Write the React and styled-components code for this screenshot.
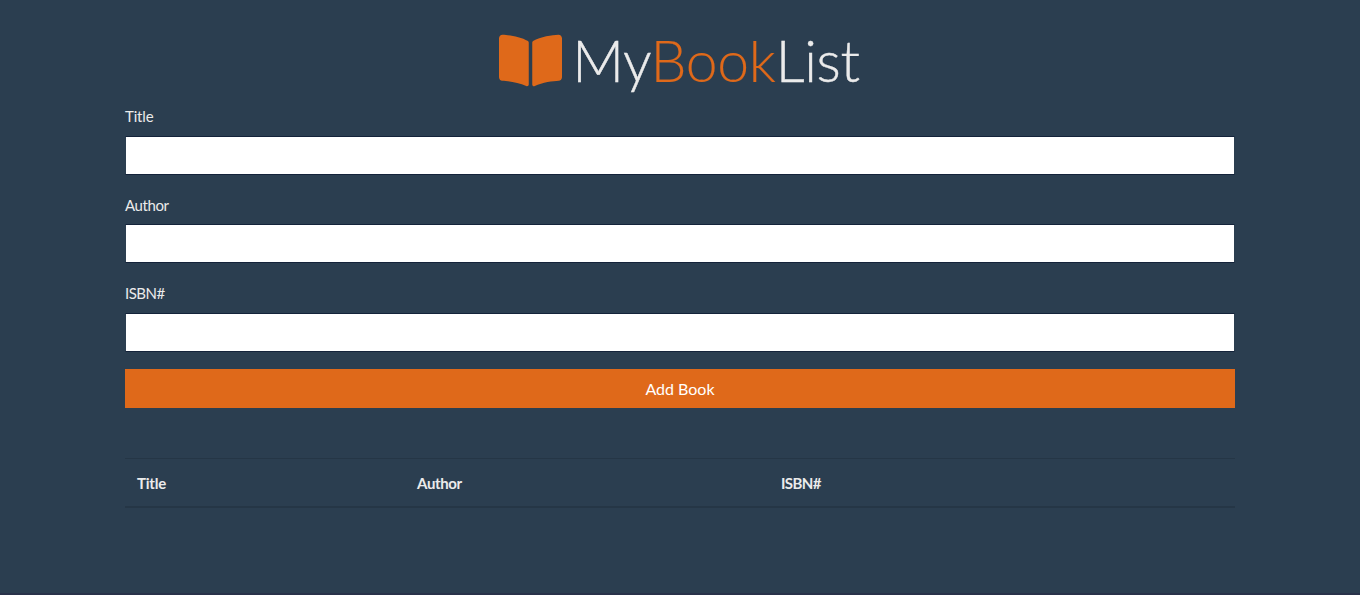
import React from "react";
import styled, { createGlobalStyle } from "styled-components";
import { FaBookOpen } from "react-icons/fa";

const GlobalStyle = createGlobalStyle`
  *, *::before, *::after { box-sizing: border-box; }
  html { overflow: hidden; background: #fff; }
  body {
    margin: 0;
    color: #ebebeb;
    font: 400 15px/1.5 Lato, sans-serif;
  }
`;

const Page = styled.div`
  height: 595px;
  background: #2b3e50;
  border-bottom: 2px solid #29324a;
`;

const Container = styled.main`
  width: 1110px;
  margin: 0 auto;
  padding-top: 24px;
`;

const Brand = styled.h1`
  display: flex;
  justify-content: center;
  align-items: center;
  height: 72px;
  margin: 0 0 9px;
  padding-right: 1px;
  font-size: 57px;
  font-weight: 300;
  line-height: 1.2;
  letter-spacing: -0.3px;
  -webkit-text-stroke: 0.4px currentColor;
`;

const BookIcon = styled(FaBookOpen)`
  width: 63px;
  height: 59px;
  margin-right: 10px;
  color: #df691a;
  stroke: none;
`;

const Accent = styled.span`
  color: #df691a;
  -webkit-text-stroke-width: 0.15px;
`;

const Form = styled.form`
  display: grid;
  row-gap: 18.75px;
`;

const Field = styled.div`
  &:last-of-type { margin-bottom: -1.75px; }
`;

const Label = styled.label`
  display: block;
  height: 23.5px;
  margin-bottom: 7px;
  letter-spacing: ${({ $spacing }) => $spacing}px;
`;

const Input = styled.input`
  display: block;
  width: 100%;
  height: 39.25px;
  padding: 6px 12px;
  border: 1px solid #14233a;
  border-width: 1px 0;
  border-left: 1px solid #2b3e50;
  border-right: 1px solid #2b3e50;
  background: #fff;
  font: inherit;
`;

const Submit = styled.button`
  display: block;
  width: 100%;
  height: 39.5px;
  padding: 1px 0 0;
  border: 0;
  background: #df691a;
  color: #fff;
  font: 400 16px/1.5 Lato, sans-serif;
`;

const Table = styled.table`
  width: 100%;
  margin-top: 50px;
  border-collapse: collapse;
  table-layout: fixed;
`;

const Heading = styled.th`
  width: ${({ $width }) => $width}px;
  height: 48px;
  padding: 2px 12px 0;
  border-top: 1px solid #253646;
  border-bottom: 2px solid #253646;
  text-align: left;
  letter-spacing: ${({ $spacing }) => $spacing}px;
`;

export default function App() {
  return (
    <>
      <GlobalStyle />
      <Page>
        <Container>
          <Brand>
            <BookIcon preserveAspectRatio="none" />
            <span>My<Accent>Book</Accent>List</span>
          </Brand>
          <Form>
            <Field><Label htmlFor="title" $spacing={-0.15}>Title</Label><Input id="title" /></Field>
            <Field><Label htmlFor="author" $spacing={-0.4}>Author</Label><Input id="author" /></Field>
            <Field><Label htmlFor="isbn" $spacing={-0.5}>ISBN#</Label><Input id="isbn" /></Field>
            <Submit type="button">Add Book</Submit>
          </Form>
          <Table>
            <thead>
              <tr>
                <Heading $width={280} $spacing={-0.2}>Title</Heading>
                <Heading $width={364} $spacing={-0.35}>Author</Heading>
                <Heading $width={466} $spacing={-0.6}>ISBN#</Heading>
              </tr>
            </thead>
          </Table>
        </Container>
      </Page>
    </>
  );
}
